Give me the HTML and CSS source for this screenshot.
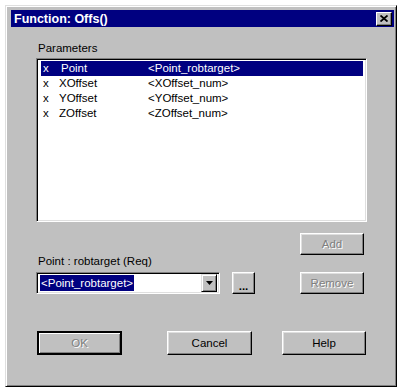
FILE: index.html
```html
<!DOCTYPE html>
<html>
<head>
	<title>Function: Offs()</title>
	<link rel="stylesheet" href="styles.css">
</head>
<body>

<div class="window">
	<div class="titlebar">
		<span class="title">Function: Offs()</span>
		<span class="close-btn">
			<svg width="8" height="7" viewBox="0 0 8 7">
				<path d="M0.5 0.5 L7.5 6.5 M7.5 0.5 L0.5 6.5" stroke="#000" stroke-width="1.8" fill="none"/>
			</svg>
		</span>
	</div>

	<div class="content">
		<div class="label params-label">Parameters</div>
		<div class="listbox">
			<div class="row selected"><span>x</span><span class="name">Point</span><span>&lt;Point_robtarget&gt;</span></div>
			<div class="row"><span>x</span><span>XOffset</span><span>&lt;XOffset_num&gt;</span></div>
			<div class="row"><span>x</span><span>YOffset</span><span>&lt;YOffset_num&gt;</span></div>
			<div class="row"><span>x</span><span>ZOffset</span><span>&lt;ZOffset_num&gt;</span></div>
		</div>

		<div class="edit-area">
			<div class="edit-left">
				<div class="label arg-label">Point : robtarget (Req)</div>
				<div class="combo-row">
					<div class="combo">
						<span class="combo-text">&lt;Point_robtarget&gt;</span>
						<span class="combo-btn">
							<svg width="7" height="4" viewBox="0 0 7 4"><path d="M0 0 H7 L3.5 4 Z" fill="#000"/></svg>
						</span>
					</div>
					<button class="btn dots-btn">...</button>
				</div>
			</div>
			<div class="edit-right">
				<button class="btn side-btn disabled">Add</button>
				<button class="btn side-btn disabled">Remove</button>
			</div>
		</div>

		<div class="actions">
			<button class="btn action-btn default disabled">OK</button>
			<button class="btn action-btn cancel-btn">Cancel</button>
			<button class="btn action-btn help-btn">Help</button>
		</div>
	</div>
</div>

</body>
</html>
```

FILE: styles.css
```css
body {
	margin: 0;
	background-color: #fff;
	font-family: "Liberation Sans", Arial, sans-serif;
	font-size: 11.5px;
	color: #000;
}
.window {
	margin: 5px 0 0 5px;
	width: 392px;
	height: 382px;
	box-sizing: border-box;
	background-color: #c0c0c0;
	border: 1px solid;
	border-color: #dfdfdf #000 #000 #dfdfdf;
	box-shadow: inset 1px 1px #fff, inset -1px -1px #808080;
	padding: 3px 2px 3px 3px;
}
.titlebar {
	margin: 1px 0 0 2px;
	height: 17px;
	background-color: #000080;
	display: flex;
	align-items: center;
	justify-content: space-between;
	padding: 0 2px 0 3px;
}
.title {
	color: #fff;
	font-weight: bold;
	font-size: 12.5px;
}
.close-btn {
	width: 16px;
	height: 14px;
	box-sizing: border-box;
	background-color: #c0c0c0;
	border: 1px solid;
	border-color: #fff #000 #000 #fff;
	box-shadow: inset -1px -1px #808080;
	display: flex;
	align-items: center;
	justify-content: center;
}
.content {
	padding: 0 27px 0 27px;
}
.label {
	line-height: 13px;
	white-space: nowrap;
}
.params-label {
	margin-top: 15px;
	margin-left: 2px;
	margin-bottom: 3px;
}
.listbox {
	height: 164px;
	box-sizing: border-box;
	background-color: #fff;
	border: 1px solid;
	border-color: #808080 #fff #fff #808080;
	box-shadow: inset 1px 1px #000, inset -1px -1px #dfdfdf;
	padding: 2px 3px 0 4px;
}
.row {
	display: grid;
	grid-template-columns: 16px 89px 1fr;
	height: 15px;
	line-height: 15px;
	padding-left: 2px;
	white-space: nowrap;
}
.row.selected {
	background-color: #000080;
	color: #fff;
}
.row .name {
	padding-left: 2px;
}
.edit-area {
	margin-top: 11px;
	display: flex;
	justify-content: space-between;
}
.edit-left {
	display: flex;
	flex-direction: column;
	justify-content: flex-end;
}
.arg-label {
	margin: 0 0 4px 2px;
}
.combo-row {
	display: flex;
	align-items: flex-start;
	gap: 12px;
}
.combo {
	width: 184px;
	height: 22px;
	box-sizing: border-box;
	background-color: #fff;
	border: 1px solid;
	border-color: #808080 #fff #fff #808080;
	box-shadow: inset 1px 1px #000, inset -1px -1px #dfdfdf;
	padding: 2px 2px 2px 3px;
	display: flex;
	align-items: center;
	justify-content: space-between;
}
.combo-text {
	background-color: #000080;
	color: #fff;
	line-height: 16px;
	padding: 0 1px;
	white-space: nowrap;
}
.combo-btn {
	width: 16px;
	height: 18px;
	box-sizing: border-box;
	background-color: #c0c0c0;
	border: 1px solid;
	border-color: #dfdfdf #000 #000 #dfdfdf;
	box-shadow: inset 1px 1px #fff, inset -1px -1px #808080;
	display: flex;
	align-items: center;
	justify-content: center;
}
.btn {
	font-family: inherit;
	font-size: 11.5px;
	color: #000;
	background-color: #c0c0c0;
	box-sizing: border-box;
	border: 1px solid;
	border-color: #fff #000 #000 #fff;
	box-shadow: inset -1px -1px #808080, inset 1px 1px #dfdfdf;
	padding: 0;
	margin: 0;
	display: flex;
	align-items: center;
	justify-content: center;
}
.btn.disabled {
	color: #808080;
	text-shadow: 1px 1px #fff;
}
.dots-btn {
	width: 23px;
	height: 22px;
	font-weight: bold;
	padding-top: 5px;
}
.edit-right {
	display: flex;
	flex-direction: column;
	gap: 17px;
	margin-right: 3px;
}
.side-btn {
	width: 64px;
	height: 22px;
}
.actions {
	margin-top: 37px;
	display: flex;
}
.action-btn {
	width: 85px;
	height: 24px;
}
.btn.default {
	border: 2px solid #000;
	box-shadow: inset 1px 1px #fff, inset -1px -1px #808080;
	margin-left: 1px;
}
.cancel-btn {
	margin-left: 45px;
}
.help-btn {
	margin-left: 30px;
	width: 84px;
}
```
